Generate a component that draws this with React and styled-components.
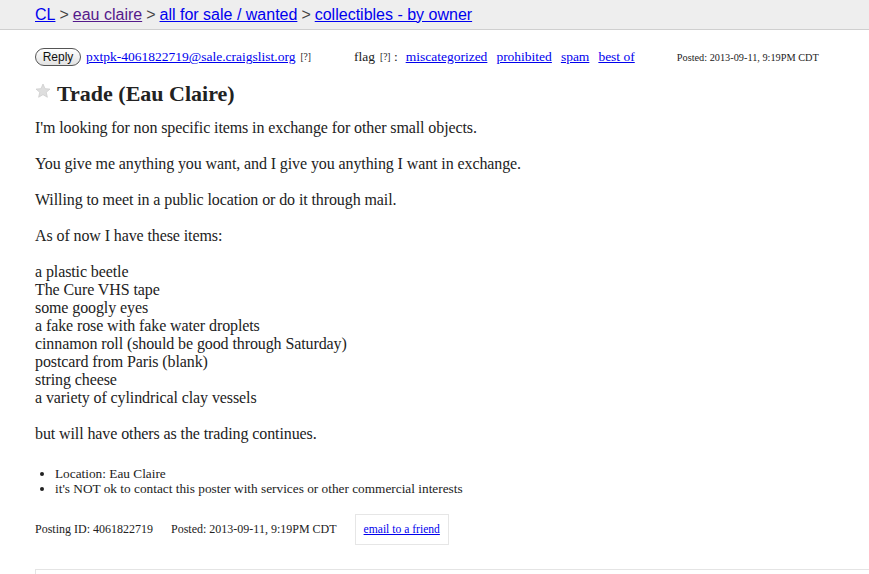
import React from 'react'
import styled, { createGlobalStyle } from 'styled-components'

const GlobalStyle = createGlobalStyle`
  body {
    margin: 0;
    background: #fff;
    font-family: "Liberation Serif", "Times New Roman", serif;
    color: #222;
  }
  a { color: #0000ee; }
`

const Crumbs = styled.div`
  height: 29px;
  background: #eeeeee;
  border-bottom: 1px solid #cfcfcf;
  padding-left: 35px;
  display: flex;
  align-items: center;
  gap: 4px;
  font-family: "Liberation Sans", Arial, sans-serif;
  font-size: 16px;
  color: #444;
  a.visited { color: #551a8b; }
`

const Page = styled.div`
  padding: 0 35px;
`

const InfoBar = styled.div`
  display: flex;
  align-items: center;
  height: 18px;
  margin-top: 18px;
  font-size: 13.5px;
`

const ReplyButton = styled.button`
  width: 46px;
  height: 18px;
  padding: 0;
  border: 1px solid #555;
  border-radius: 9px;
  background: linear-gradient(#ffffff, #e2e2e2);
  font-family: "Liberation Sans", Arial, sans-serif;
  font-size: 12px;
  color: #111;
`

const Sup = styled.sup`
  font-size: 9.5px;
  margin-left: 5px;
  vertical-align: 5px;
`

const Flag = styled.div`
  margin-left: ${p => p.$offset}px;
  display: flex;
  align-items: center;
  a { margin-left: 9px; }
  a:first-of-type { margin-left: 8px; }
`

const PostedTop = styled.span`
  margin-left: 42px;
  font-size: 10.3px;
`

const TitleRow = styled.h2`
  display: flex;
  align-items: center;
  margin: 15px 0 0;
  font-size: 22px;
  font-weight: bold;
  color: #222;
  svg { margin-right: 6px; margin-top: -6px; }
`

const Body = styled.section`
  margin-top: 12px;
  font-size: 16px;
  line-height: 18px;
  letter-spacing: -0.1px;
`

const Notices = styled.ul`
  margin: 23px 0 0;
  padding-left: 20px;
  font-size: 13.3px;
  line-height: 15px;
`

const Footer = styled.div`
  display: flex;
  align-items: center;
  margin-top: 18px;
  font-size: 12px;
  span + span { margin-left: 18px; }
`

const MailBox = styled.div`
  margin-left: 18px;
  padding: 8px 8px;
  border: 1px solid #e6e6e6;
  font-size: 11.6px;
`

const BottomBox = styled.div`
  margin-top: 24px;
  height: 20px;
  border-top: 1px solid #e4e4e4;
  border-left: 1px solid #e4e4e4;
  margin-right: -35px;
`

const Star = () => (
  <svg width="16" height="16" viewBox="0 0 24 23">
    <path
      d="M12 1l3.1 7 7.4.6-5.6 4.9 1.7 7.4L12 17l-6.6 3.9 1.7-7.4L1.5 8.6 8.9 8z"
      fill="#dedede"
      stroke="#c8c8c8"
      strokeWidth="1"
    />
  </svg>
)

const items = [
  'a plastic beetle',
  'The Cure VHS tape',
  'some googly eyes',
  'a fake rose with fake water droplets',
  'cinnamon roll (should be good through Saturday)',
  'postcard from Paris (blank)',
  'string cheese',
  'a variety of cylindrical clay vessels',
]

export default function App() {
  return (
    <>
      <GlobalStyle />
      <Crumbs>
        <a href="#">CL</a> &gt; <a className="visited" href="#">eau claire</a> &gt;{' '}
        <a href="#">all for sale / wanted</a> &gt; <a href="#">collectibles - by owner</a>
      </Crumbs>
      <Page>
        <InfoBar>
          <ReplyButton>Reply</ReplyButton>
          <a href="#" style={{ marginLeft: 5 }}>pxtpk-4061822719@sale.craigslist.org</a>
          <Sup>[?]</Sup>
          <Flag $offset={43}>
            flag<Sup>[?]</Sup>&nbsp;:
            <a href="#">miscategorized</a>
            <a href="#">prohibited</a>
            <a href="#">spam</a>
            <a href="#">best of</a>
          </Flag>
          <PostedTop>Posted: 2013-09-11, 9:19PM CDT</PostedTop>
        </InfoBar>
        <TitleRow>
          <Star />
          Trade (Eau Claire)
        </TitleRow>
        <Body>
          I'm looking for non specific items in exchange for other small objects.
          <br /><br />
          You give me anything you want, and I give you anything I want in exchange.
          <br /><br />
          Willing to meet in a public location or do it through mail.
          <br /><br />
          As of now I have these items:
          <br /><br />
          {items.map(item => (
            <React.Fragment key={item}>{item}<br /></React.Fragment>
          ))}
          <br />
          but will have others as the trading continues.
        </Body>
        <Notices>
          <li>Location: Eau Claire</li>
          <li>it's NOT ok to contact this poster with services or other commercial interests</li>
        </Notices>
        <Footer>
          <span>Posting ID: 4061822719</span>
          <span>Posted: 2013-09-11, 9:19PM CDT</span>
          <MailBox><a href="#">email to a friend</a></MailBox>
        </Footer>
        <BottomBox />
      </Page>
    </>
  )
}
